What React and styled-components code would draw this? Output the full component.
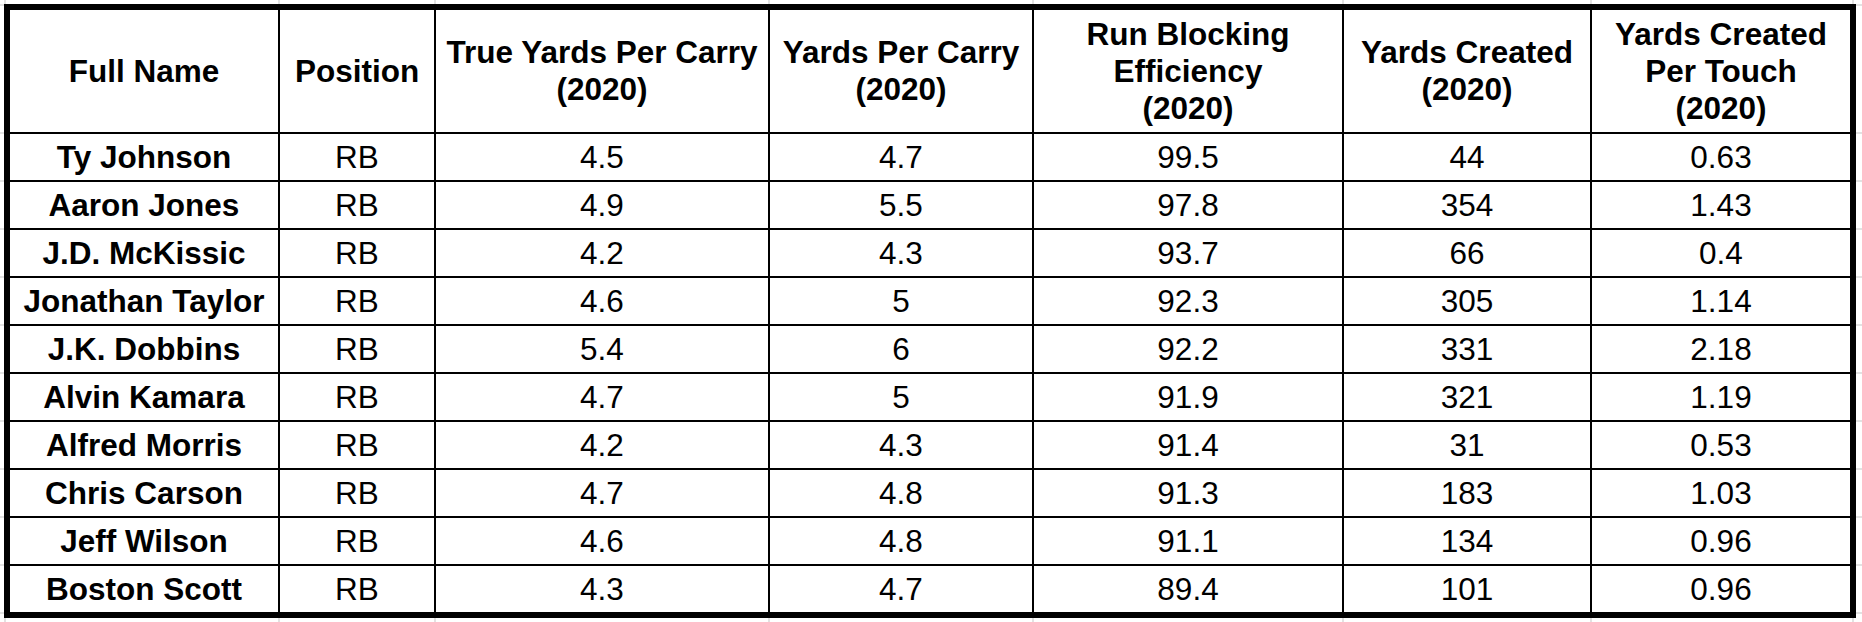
import React from "react";
import styled, { createGlobalStyle } from "styled-components";

const GlobalStyle = createGlobalStyle`
  html, body {
    margin: 0;
    padding: 0;
    background: #ffffff;
  }
  body {
    font-family: "Liberation Sans", Arial, sans-serif;
    color: #000;
  }
`;

const COLUMNS = [268, 154, 332, 262, 308, 246, 258];
const GRID_X = [4, 278, 434, 768, 1032, 1342, 1590, 1852];
const GRID_Y = [4, 132, 180, 228, 276, 324, 372, 420, 468, 516, 564, 612];

const headers = [
  ["Full Name"],
  ["Position"],
  ["True Yards Per Carry", "(2020)"],
  ["Yards Per Carry", "(2020)"],
  ["Run Blocking", "Efficiency", "(2020)"],
  ["Yards Created", "(2020)"],
  ["Yards Created", "Per Touch", "(2020)"],
];

const rows = [
  ["Ty Johnson", "RB", "4.5", "4.7", "99.5", "44", "0.63"],
  ["Aaron Jones", "RB", "4.9", "5.5", "97.8", "354", "1.43"],
  ["J.D. McKissic", "RB", "4.2", "4.3", "93.7", "66", "0.4"],
  ["Jonathan Taylor", "RB", "4.6", "5", "92.3", "305", "1.14"],
  ["J.K. Dobbins", "RB", "5.4", "6", "92.2", "331", "2.18"],
  ["Alvin Kamara", "RB", "4.7", "5", "91.9", "321", "1.19"],
  ["Alfred Morris", "RB", "4.2", "4.3", "91.4", "31", "0.53"],
  ["Chris Carson", "RB", "4.7", "4.8", "91.3", "183", "1.03"],
  ["Jeff Wilson", "RB", "4.6", "4.8", "91.1", "134", "0.96"],
  ["Boston Scott", "RB", "4.3", "4.7", "89.4", "101", "0.96"],
];

// faint spreadsheet gridlines peeking out around the table
const gridBackground = (xs, ys) => {
  const layers = [];
  const positions = [];
  const sizes = [];
  xs.forEach((x) => {
    layers.push("linear-gradient(#e2e2e2, #e2e2e2)");
    positions.push(`${x}px 0`);
    sizes.push("2px 100%");
  });
  ys.forEach((y) => {
    layers.push("linear-gradient(#e2e2e2, #e2e2e2)");
    positions.push(`0 ${y}px`);
    sizes.push("100% 2px");
  });
  return `
    background-image: ${layers.join(", ")};
    background-position: ${positions.join(", ")};
    background-size: ${sizes.join(", ")};
    background-repeat: no-repeat;
  `;
};

const Sheet = styled.div`
  width: 1862px;
  height: 622px;
  box-sizing: border-box;
  padding: 4px;
  background-color: #ffffff;
  ${({ $xs, $ys }) => gridBackground($xs, $ys)}
`;

const Table = styled.div`
  display: grid;
  grid-template-columns: ${({ $cols }) => $cols.map((c) => `${c}px`).join(" ")};
  grid-template-rows: 122px repeat(${({ $rows }) => $rows}, 46px);
  gap: 2px;
  padding: 6px;
  background: #000;
  width: max-content;
`;

const HeadCell = styled.div`
  background: #fff;
  display: flex;
  flex-direction: column;
  align-items: center;
  justify-content: center;
  text-align: center;
  font-size: 31.5px;
  font-weight: 700;
  line-height: 37px;
  white-space: nowrap;
`;

const Cell = styled.div`
  background: #fff;
  display: flex;
  align-items: center;
  justify-content: center;
  font-size: 31.5px;
  font-weight: ${({ $bold }) => ($bold ? 700 : 400)};
  white-space: nowrap;
  overflow: hidden;
`;

const Line = styled.span`
  display: block;
`;

export default function App() {
  return (
    <>
      <GlobalStyle />
      <Sheet $xs={GRID_X} $ys={GRID_Y}>
        <Table $cols={COLUMNS} $rows={rows.length}>
          {headers.map((lines, i) => (
            <HeadCell key={`h${i}`}>
              {lines.map((l) => (
                <Line key={l}>{l}</Line>
              ))}
            </HeadCell>
          ))}
          {rows.map((row, r) =>
            row.map((value, c) => (
              <Cell key={`${r}-${c}`} $bold={c === 0}>
                {value}
              </Cell>
            ))
          )}
        </Table>
      </Sheet>
    </>
  );
}
